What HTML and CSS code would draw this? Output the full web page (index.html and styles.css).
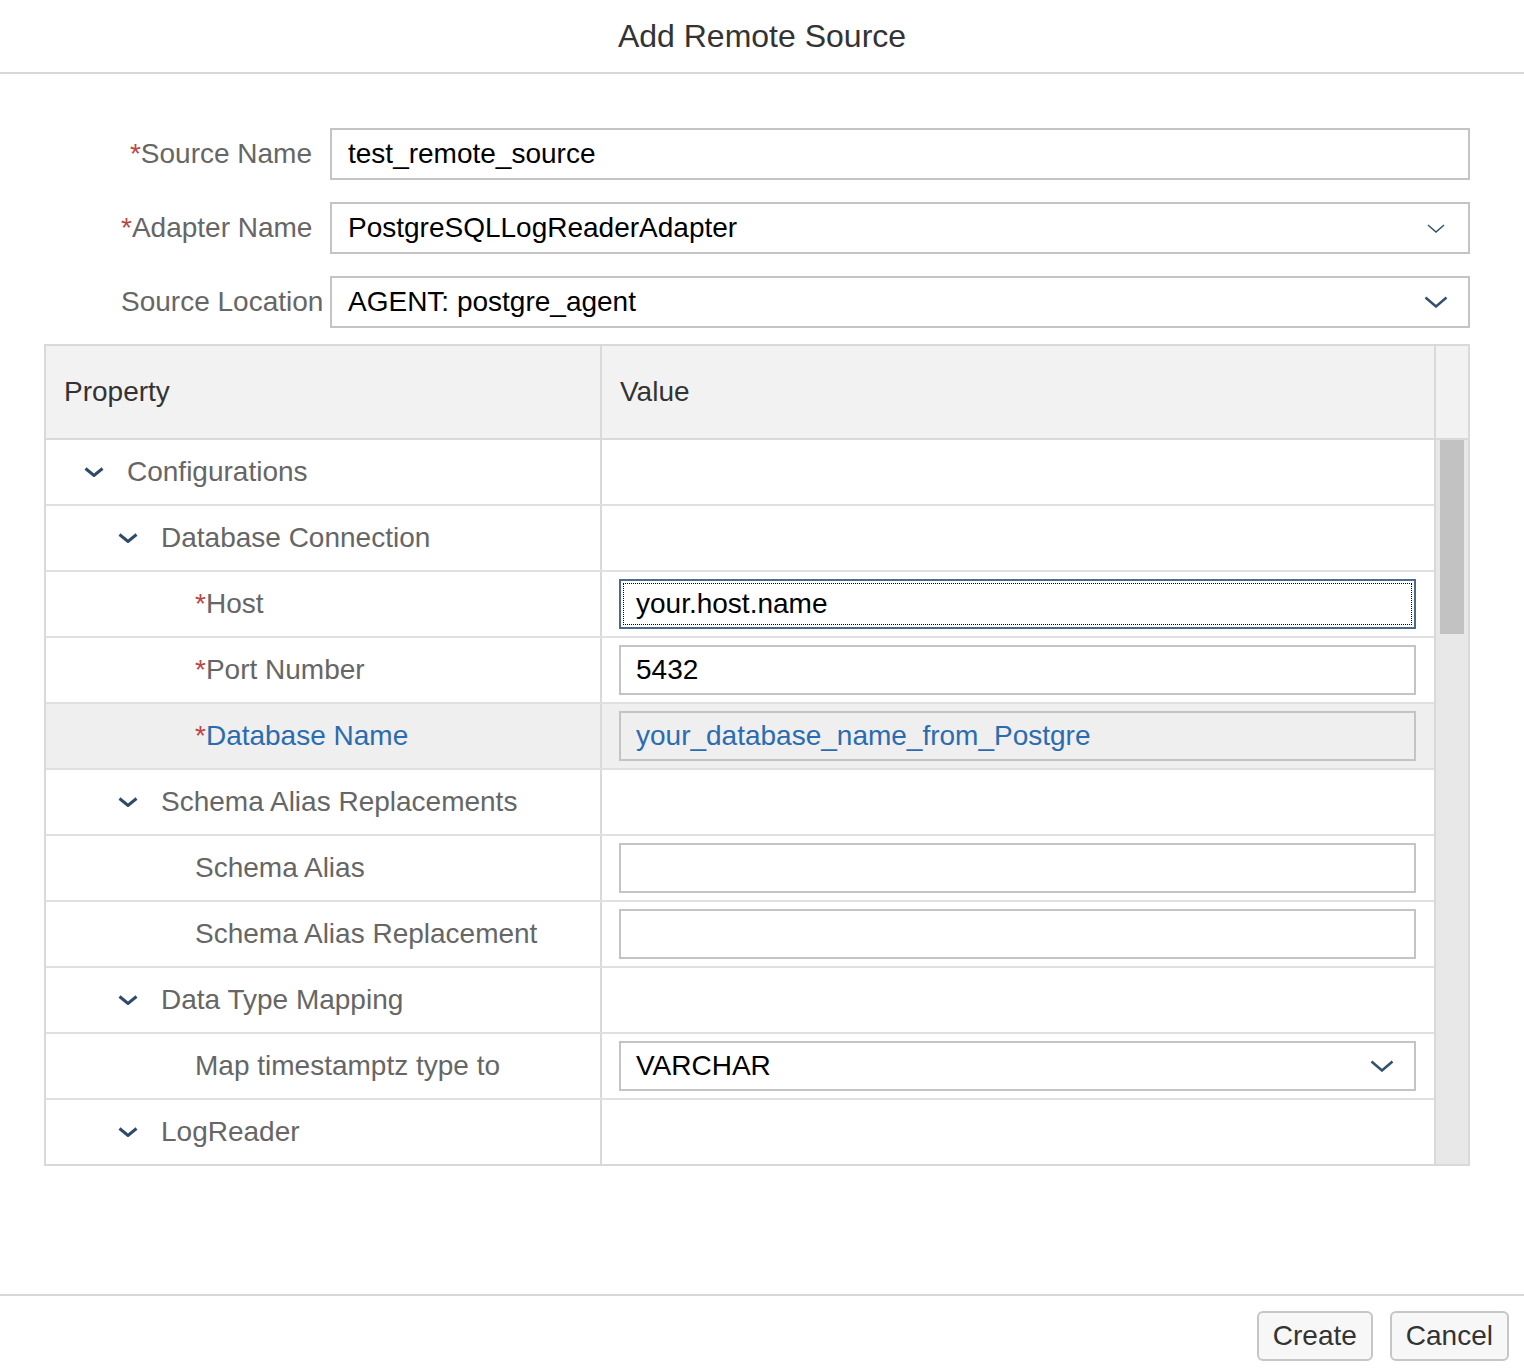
FILE: index.html
```html
<!DOCTYPE html>
<html lang="en">
<head>
<meta charset="utf-8">
<title>Add Remote Source</title>
<link rel="stylesheet" href="styles.css">
</head>
<body>
<div class="dialog">
  <header class="dlg-header"><h1 class="dlg-title">Add Remote Source</h1></header>

  <main class="dlg-body">
    <div class="form">
      <div class="form-row">
        <label class="form-label"><span class="req">*</span>Source Name</label>
        <div class="field"><span class="field-text">test_remote_source</span></div>
      </div>
      <div class="form-row">
        <label class="form-label"><span class="req">*</span>Adapter Name</label>
        <div class="field select"><span class="field-text">PostgreSQLLogReaderAdapter</span>
          <svg class="chev-sm" width="18" height="9" viewBox="0 0 18 9"><path d="M1 1 L9 8 L17 1" fill="none" stroke="#34506e" stroke-width="1.5"/></svg>
        </div>
      </div>
      <div class="form-row">
        <label class="form-label">Source Location</label>
        <div class="field select"><span class="field-text">AGENT: postgre_agent</span>
          <svg class="chev-lg" width="24" height="12" viewBox="0 0 24 12"><path d="M1.5 1.5 L12 10.5 L22.5 1.5" fill="none" stroke="#34506e" stroke-width="2.5"/></svg>
        </div>
      </div>
    </div>

    <div class="table">
      <div class="thead">
        <div class="th th-prop">Property</div>
        <div class="th th-val">Value</div>
        <div class="th th-scroll"></div>
      </div>
      <div class="tbody">
        <div class="rows">
          <div class="row">
            <div class="cell-prop lvl1"><svg class="toggle" width="20" height="10" viewBox="0 0 20 10"><path d="M1.5 1.5 L10 8.5 L18.5 1.5" fill="none" stroke="#2f4a6a" stroke-width="3"/></svg><span>Configurations</span></div>
            <div class="cell-val"></div>
          </div>
          <div class="row">
            <div class="cell-prop lvl2"><svg class="toggle" width="20" height="10" viewBox="0 0 20 10"><path d="M1.5 1.5 L10 8.5 L18.5 1.5" fill="none" stroke="#2f4a6a" stroke-width="3"/></svg><span>Database Connection</span></div>
            <div class="cell-val"></div>
          </div>
          <div class="row">
            <div class="cell-prop lvl3"><span class="toggle-space"></span><span><span class="req">*</span>Host</span></div>
            <div class="cell-val"><div class="field tfield focused"><span class="field-text">your.host.name</span></div></div>
          </div>
          <div class="row">
            <div class="cell-prop lvl3"><span class="toggle-space"></span><span><span class="req">*</span>Port Number</span></div>
            <div class="cell-val"><div class="field tfield"><span class="field-text">5432</span></div></div>
          </div>
          <div class="row hover">
            <div class="cell-prop lvl3 blue"><span class="toggle-space"></span><span><span class="req">*</span>Database Name</span></div>
            <div class="cell-val"><div class="field tfield hovered"><span class="field-text">your_database_name_from_Postgre</span></div></div>
          </div>
          <div class="row">
            <div class="cell-prop lvl2"><svg class="toggle" width="20" height="10" viewBox="0 0 20 10"><path d="M1.5 1.5 L10 8.5 L18.5 1.5" fill="none" stroke="#2f4a6a" stroke-width="3"/></svg><span>Schema Alias Replacements</span></div>
            <div class="cell-val"></div>
          </div>
          <div class="row">
            <div class="cell-prop lvl3"><span class="toggle-space"></span><span>Schema Alias</span></div>
            <div class="cell-val"><div class="field tfield"></div></div>
          </div>
          <div class="row">
            <div class="cell-prop lvl3"><span class="toggle-space"></span><span>Schema Alias Replacement</span></div>
            <div class="cell-val"><div class="field tfield"></div></div>
          </div>
          <div class="row">
            <div class="cell-prop lvl2"><svg class="toggle" width="20" height="10" viewBox="0 0 20 10"><path d="M1.5 1.5 L10 8.5 L18.5 1.5" fill="none" stroke="#2f4a6a" stroke-width="3"/></svg><span>Data Type Mapping</span></div>
            <div class="cell-val"></div>
          </div>
          <div class="row">
            <div class="cell-prop lvl3"><span class="toggle-space"></span><span>Map timestamptz type to</span></div>
            <div class="cell-val"><div class="field tfield select"><span class="field-text">VARCHAR</span>
              <svg class="chev-lg" width="24" height="12" viewBox="0 0 24 12"><path d="M1.5 1.5 L12 10.5 L22.5 1.5" fill="none" stroke="#34506e" stroke-width="2.5"/></svg>
            </div></div>
          </div>
          <div class="row last">
            <div class="cell-prop lvl2"><svg class="toggle" width="20" height="10" viewBox="0 0 20 10"><path d="M1.5 1.5 L10 8.5 L18.5 1.5" fill="none" stroke="#2f4a6a" stroke-width="3"/></svg><span>LogReader</span></div>
            <div class="cell-val"></div>
          </div>
        </div>
        <div class="scroll-track"><div class="scroll-thumb"></div></div>
      </div>
    </div>
  </main>

  <footer class="dlg-footer">
    <button class="btn">Create</button>
    <button class="btn">Cancel</button>
  </footer>
</div>
</body>
</html>
```

FILE: styles.css
```css
* { box-sizing: border-box; }

html, body {
  margin: 0;
  padding: 0;
  background: #ffffff;
}

body {
  font-family: "Liberation Sans", Arial, sans-serif;
  font-size: 28px;
  color: #333333;
}

.dialog {
  height: 1372px;
  display: flex;
  flex-direction: column;
}

.dlg-header {
  height: 74px;
  border-bottom: 2px solid #d9d9d9;
  display: flex;
  align-items: center;
  justify-content: center;
  flex: none;
}

.dlg-title {
  margin: 0;
  font-size: 32px;
  font-weight: normal;
  color: #333333;
  line-height: 1;
  padding-top: 0;
}

.dlg-body {
  padding: 54px 54px 0 44px;
  flex: none;
}

.form {
  display: flex;
  flex-direction: column;
  gap: 22px;
  padding-left: 77px;
}

.form-row {
  display: flex;
  align-items: center;
  height: 52px;
}

.form-label {
  width: 191px;
  flex: none;
  text-align: right;
  white-space: nowrap;
  color: #666666;
  margin-right: 18px;
}

.req {
  color: #b94646;
}

.field {
  flex: 1;
  height: 52px;
  border: 2px solid #c4c4c4;
  background: #ffffff;
  display: flex;
  align-items: center;
  padding: 0 16px;
  color: #000000;
  position: relative;
}

.field-text {
  white-space: nowrap;
  flex: 1;
}

.select .chev-sm {
  margin-right: 7px;
  flex: none;
}

.select .chev-lg {
  margin-right: 4px;
  flex: none;
}

/* table */
.table {
  margin-top: 16px;
  border: 2px solid #d9d9d9;
}

.thead {
  display: grid;
  grid-template-columns: 556px 834px 32px;
  height: 94px;
  background: #f2f2f2;
  border-bottom: 2px solid #d9d9d9;
}

.th {
  display: flex;
  align-items: center;
  padding-left: 18px;
  color: #333333;
}

.th-prop, .th-val {
  border-right: 2px solid #d9d9d9;
}

.th-scroll {
  padding: 0;
}

.tbody {
  display: flex;
}

.rows {
  width: 1388px;
  flex: none;
}

.row {
  display: grid;
  grid-template-columns: 556px 832px;
  height: 66px;
  border-bottom: 2px solid #e0e0e0;
}

.row.last {
  height: 64px;
  border-bottom: none;
}

.row.hover {
  background: #efefef;
}

.cell-prop {
  border-right: 2px solid #d9d9d9;
  display: flex;
  align-items: center;
  color: #666666;
  white-space: nowrap;
}

.cell-prop.lvl1 { padding-left: 38px; }
.cell-prop.lvl2 { padding-left: 72px; }
.cell-prop.lvl3 { padding-left: 106px; }

.cell-prop.blue { color: #2b6cb0; }

.toggle, .toggle-space {
  width: 20px;
  height: 10px;
  flex: none;
  margin-right: 23px;
  display: block;
}

.cell-val {
  display: flex;
  align-items: center;
  padding: 0 18px 0 17px;
}

.tfield {
  height: 50px;
  padding: 0 15px;
}

.tfield.focused {
  border-color: #4a6a8e;
  outline: 1px dotted #000000;
  outline-offset: -5px;
}

.tfield.hovered {
  background: #efefef;
  color: #2b6cb0;
}

.tfield.select .chev-lg {
  margin-right: 5px;
}

.scroll-track {
  width: 34px;
  flex: none;
  border-left: 2px solid #d9d9d9;
  background: #e8e8e8;
  padding: 0 4px;
}

.scroll-thumb {
  height: 194px;
  background: #c2c2c2;
}

/* footer */
.dlg-footer {
  margin-top: auto;
  border-top: 2px solid #d9d9d9;
  padding: 15px 15px 11px 0;
  display: flex;
  justify-content: flex-end;
  gap: 17px;
  flex: none;
}

.btn {
  height: 50px;
  padding: 0 14px;
  font-family: "Liberation Sans", Arial, sans-serif;
  font-size: 28px;
  color: #333333;
  background: #f7f7f7;
  border: 2px solid #c6c6c6;
  border-radius: 6px;
}
```
